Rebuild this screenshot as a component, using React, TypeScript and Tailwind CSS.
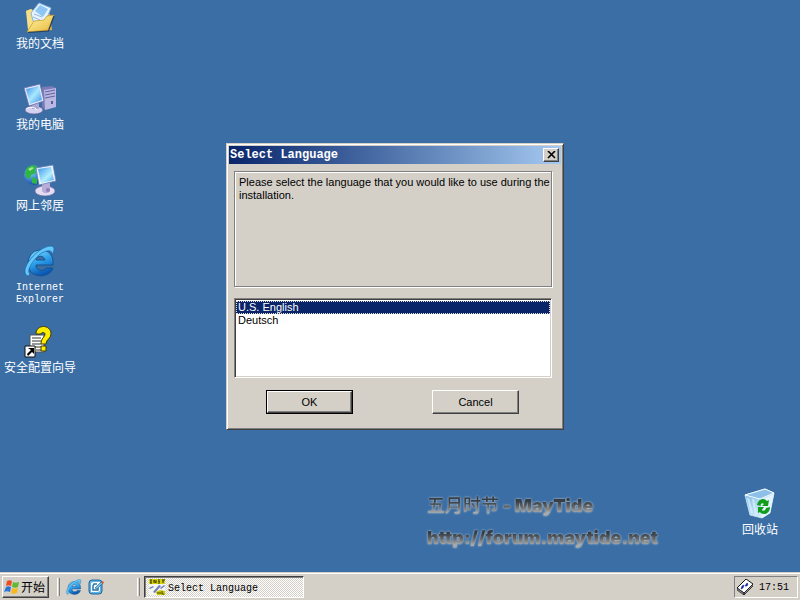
import React from 'react';

const songti = "font-['Liberation_Mono','Noto_Sans_CJK_SC',monospace]";

function DocumentsIcon() {
  return (
    <svg className="size-8" viewBox="0 0 32 32" aria-hidden="true">
      <defs>
        <linearGradient id="folder" x1="0" y1="0" x2="1" y2="1">
          <stop offset="0" stopColor="#fff6a8" />
          <stop offset="1" stopColor="#e8b83a" />
        </linearGradient>
      </defs>
      <path d="M2 9l5-2 4 3 15 2 2 16-20 2z" fill="#dfb544" />
      <path d="M2 9l5-2 4 3 6 3-2 16-11-1z" fill="#f7e084" />
      <path d="M7 11L15 1l12 5-6 15-12-2z" fill="#e4f3ff" stroke="#8ab4dc" strokeWidth="1" />
      <path d="M11 9l5-6 8 4-5 8z" fill="#8dc6f2" />
      <path d="M10 12l8 3M9 15l7 3" stroke="#9cb9d8" />
      <path d="M10 19l10-1 3-4 7-1-6 15L3 30z" fill="url(#folder)" stroke="#c59420" strokeWidth="0.7" />
      <path d="M4 30.500L24.500 29 30 14" fill="none" stroke="#27415f" strokeWidth="1.200" />
    </svg>
  );
}

function ComputerIcon() {
  return (
    <svg className="size-8" viewBox="0 0 32 32" aria-hidden="true">
      <defs>
        <linearGradient id="lcd" x1="0" y1="0" x2="1" y2="1">
          <stop offset="0" stopColor="#3f8fe6" />
          <stop offset="0.500" stopColor="#a8e8ff" />
          <stop offset="1" stopColor="#3b8ee0" />
        </linearGradient>
      </defs>
      <path d="M18 4l10-1 4 2v19l-11 3-3-3z" fill="#7b7ab8" />
      <path d="M20 7l12-2v19l-11 3z" fill="#b9b8e2" />
      <path d="M21 9l10-2M21 12l10-2M21 15l10-2" stroke="#6361a2" strokeWidth="1.200" />
      <path d="M28 18v3" stroke="#5c5b98" strokeWidth="2" />
      <ellipse cx="10" cy="27" rx="9" ry="4" fill="#d4d2ee" stroke="#615f99" strokeWidth="0.700" />
      <path d="M8 18h7v8H8z" fill="#aaa8d4" />
      <path d="M0 5l16-4 4 17-15 5z" fill="#e6eaff" stroke="#6670aa" strokeWidth="0.800" />
      <path d="M2 6l13-3 3 14-12 4z" fill="url(#lcd)" />
      <path d="M2 26c4-3 9-2 11 1" stroke="#fff" fill="none" />
    </svg>
  );
}

function NetworkIcon() {
  return (
    <svg className="size-8" viewBox="0 0 32 32" aria-hidden="true">
      <defs>
        <radialGradient id="globe" cx="0.350" cy="0.350" r="0.700">
          <stop offset="0" stopColor="#76d6ff" />
          <stop offset="1" stopColor="#1545a4" />
        </radialGradient>
        <linearGradient id="netlcd" x1="0" y1="0" x2="1" y2="1">
          <stop offset="0" stopColor="#3d94e8" />
          <stop offset="0.600" stopColor="#b4efff" />
          <stop offset="1" stopColor="#4599e4" />
        </linearGradient>
      </defs>
      <circle cx="10" cy="11" r="10" fill="url(#globe)" />
      <path d="M3 4c5-4 8-3 10-1l-2 3 1 3-5 2-1 4-4-2-1-4zM8 13l5 2v5l-5-1z" fill="#31b545" />
      <path d="M4 5l4-2 2 1-4 3z" fill="#a1ec86" />
      <ellipse cx="21" cy="27" rx="10" ry="5" fill="#e4dcf2" stroke="#7c71a6" strokeWidth="0.700" />
      <path d="M18 19h8v8c-2 3-6 3-8 0z" fill="#b8add6" />
      <path d="M12 4l17-3 3 16-17 4z" fill="#edf3ff" stroke="#6680b5" strokeWidth="0.800" />
      <path d="M14 5l13-2 3 13-13 3z" fill="url(#netlcd)" />
      <circle cx="24" cy="26" r="2" fill="#8c7bb6" />
    </svg>
  );
}

function ExplorerIcon({ className, id }: { className: string; id: string }) {
  return (
    <svg className={className} viewBox="0 0 32 32" aria-hidden="true">
      <defs>
        <linearGradient id={id} x1="0" y1="0" x2="0.400" y2="1">
          <stop offset="0" stopColor="#8be0ff" />
          <stop offset="0.550" stopColor="#2c9fea" />
          <stop offset="1" stopColor="#0b58b2" />
        </linearGradient>
      </defs>
      <path
        fillRule="evenodd"
        d="M17 5c8 0 13 6 12 15H12c0 6 8 7 10 3h7C26 34 4 34 4 19 4 11 9 5 17 5zM12 15h9c-1-5-8-5-9 0z"
        fill={`url(#${id})`}
        stroke="#134f91"
        strokeWidth="0.900"
      />
      <path d="M4 31C-4 28 5 13 15 6c7-5 15-7 15-2 0 2-1 4-2 6 1-6-6-5-12-1C8 16 2 26 6 29z" fill="#62c8fb" stroke="#1d69b0" strokeWidth="0.700" />
    </svg>
  );
}

function WizardIcon() {
  return (
    <svg className="size-8" viewBox="0 0 32 32" aria-hidden="true">
      <path d="M6 9h14v17H6z" fill="#fff" stroke="#555" />
      <path d="M8 12h9M8 15h10M8 18h9M10 21h8M12 24h6" stroke="#333" />
      <path d="M12 8c0-10 15-10 15 0 0 5-5 5-5 10h-5c0-6 4-7 4-10 0-2-4-2-4 0z" fill="#ffed00" stroke="#403c00" strokeWidth="1" />
      <path d="M17 20h5v5h-5z" fill="#ffed00" stroke="#403c00" />
      <path d="M1 20h10v11H1z" fill="#fff" stroke="#111" />
      <path d="M4 22h6v6l-2-2-4 4-1-2 4-4z" fill="#000" />
    </svg>
  );
}

function RecycleIcon() {
  return (
    <svg className="size-8" viewBox="0 0 32 32" aria-hidden="true">
      <defs>
        <linearGradient id="bin" x1="0" y1="0" x2="1" y2="1">
          <stop offset="0" stopColor="#6fb2e6" />
          <stop offset="0.500" stopColor="#b4dcf6" />
          <stop offset="1" stopColor="#f3fbff" />
        </linearGradient>
      </defs>
      <path d="M1 7L21 1l9 4-4 20-8 5-12-3z" fill="url(#bin)" stroke="#d5ecfb" strokeWidth="0.800" />
      <path d="M1 7l15 4 14-6-9-4z" fill="#8cc0e8" stroke="#f4fcff" />
      <path d="M16 12l2 18 8-5 4-19z" fill="#e6f6ff" opacity="0.850" />
      <path d="M4 10l4 15M9 11l3 16" stroke="#e6f7ff" strokeWidth="2" opacity="0.600" />
      <path d="M13 17c1-6 7-8 10-4l2-1-1 6h-6l2-2c-2-2-4 0-3 2zM26 19c0 7-7 9-10 5l-2 1v-6h6l-2 3c1 2 4 0 4-2z" fill="#129c1c" />
    </svg>
  );
}

function StartFlag() {
  return (
    <svg className="size-4 shrink-0" viewBox="0 0 16 16" aria-hidden="true">
      <path d="M3 2c2-1 3-1 5 0L7 7C5 6 4 6 2 7z" fill="#ee4b23" />
      <path d="M9 3c2 1 3 1 6 0l-1 5c-2 1-4 1-6 0z" fill="#62b733" />
      <path d="M2 8c2-1 3-1 5 0l-1 5c-2-1-4-1-6 0z" fill="#2d74d8" />
      <path d="M8 9c2 1 3 1 6 0l-1 5c-3 1-4 1-6 0z" fill="#f6bb18" />
    </svg>
  );
}

function ShowDesktopIcon() {
  return (
    <svg className="size-4" viewBox="0 0 16 16" aria-hidden="true">
      <rect x="1" y="1" width="13" height="14" rx="3" fill="#5fb0e2" stroke="#1b679e" />
      <path d="M3 4l2-1h7v9l-2 1H3z" fill="#fff" />
      <path d="M9 5H6L5 7v4h5V9" fill="none" stroke="#2472ac" strokeWidth="1.500" />
      <path d="M7 9l6-6 2 1-6 6z" fill="#73bce5" stroke="#185c91" strokeWidth="0.600" />
      <path d="M13 3l1-1 2 1-1 2z" fill="#d8532b" />
    </svg>
  );
}

function SetupIcon() {
  return (
    <svg className="size-4 shrink-0" viewBox="0 0 16 16" aria-hidden="true">
      <path d="M0 0h16v16H0z" fill="#f5f5f0" />
      <path d="M0 0h16v5H0z" fill="#d6d20a" />
      <path d="M1 1h2M2 1v3M1 4h2M5 4V1l2 3V1M9 1h2M9 2l2 1M9 4h2M13 1h3M14 1v3" stroke="#3d3b00" fill="none" />
      <path d="M0 9l4-2 1 1-4 2zM4 13l6-7 2 1-6 7zM11 9l4-3 1 1-4 3z" fill="#6d7fc0" />
      <path d="M7 13l4-2 5 1v4H8z" fill="#c9c908" />
      <path d="M8 14h2M11 13v2M13 12v3h2" stroke="#4d4b00" fill="none" />
    </svg>
  );
}

function PenIcon() {
  return (
    <svg className="size-4 shrink-0" viewBox="0 0 16 16" aria-hidden="true">
      <path d="M0 9L9 0l7 5-9 9z" fill="#fff" stroke="#111" />
      <path d="M0 9v2l7 5v-2zM7 16l9-9V5l-9 9z" fill="#8f8f98" stroke="#111" strokeWidth="0.700" />
      <path d="M4 10l1-3 2-1-1 3zM8 7l2-3 1 1-1 2z" fill="#1728a4" stroke="#1728a4" strokeWidth="0.600" />
    </svg>
  );
}

function Shortcut({ icon, lines }: { icon: React.ReactNode; lines: string[] }) {
  return (
    <button type="button" className={`flex h-[81px] w-20 flex-col items-center gap-[5px] pt-0.5 text-white ${songti}`}>
      {icon}
      <span className="flex flex-col items-center whitespace-nowrap">
        {lines.map((line) => (
          <span key={line} className={/^[A-Z]/.test(line) ? 'text-[10px] leading-3' : 'text-[12px] leading-3'}>
            {line}
          </span>
        ))}
      </span>
    </button>
  );
}

const raised =
  'border border-t-white border-l-white border-r-[#404040] border-b-[#404040] bg-[#d4d0c8] shadow-[inset_-1px_-1px_0_#808080]';

function LanguageDialog() {
  return (
    <form
      role="dialog"
      aria-labelledby="dialog-title"
      onSubmit={(event) => event.preventDefault()}
      className="absolute top-[143px] left-[226px] w-[338px] border border-t-[#d4d0c8] border-r-[#404040] border-b-[#404040] border-l-[#d4d0c8] bg-[#d4d0c8] p-[2px] font-['Liberation_Sans',Arial,sans-serif] text-[11px] leading-[13px] text-black shadow-[inset_1px_1px_0_#fff,inset_-1px_-1px_0_#808080]"
    >
      <header className="flex h-[18px] items-center justify-between bg-linear-to-r from-[#0a246a] to-[#a6caf0] pr-[2px] pl-px">
        <h1 id="dialog-title" className={`text-[12px] font-bold text-white ${songti}`}>Select Language</h1>
        <button type="button" aria-label="Close" className={`flex h-[14px] w-4 items-center justify-center ${raised}`}>
          <svg className="h-2 w-[9px]" viewBox="0 0 9 8" aria-hidden="true">
            <path d="M1 0l7 7M8 0L1 7" stroke="#000" strokeWidth="1.600" />
          </svg>
        </button>
      </header>
      <div className="pt-[7px] pr-[9px] pb-[13px] pl-[5px]">
        <div className="h-[116px] border border-[#808080] py-1 pl-1 shadow-[1px_1px_0_#fff,inset_1px_1px_0_#fff]">
          <label htmlFor="language">Please select the language that you would like to use during the installation.</label>
        </div>
        <select
          id="language"
          size={5}
          defaultValue="en"
          className="mt-[11px] block h-[80px] w-full appearance-none overflow-hidden rounded-none border border-t-[#808080] border-r-white border-b-white border-l-[#808080] bg-white pt-[2px] pr-px pl-px shadow-[inset_1px_1px_0_#404040,inset_-1px_-1px_0_#d4d0c8] outline-none"
        >
          <option value="en" className="h-[13px] min-h-0 px-[2px] py-0 leading-[13px] outline outline-1 -outline-offset-1 outline-dotted outline-[#e8e4da] checked:bg-linear-to-r checked:from-[#0a246a] checked:to-[#0a246a] [-webkit-text-fill-color:white]">
            U.S. English
          </option>
          <option value="de" className="h-[13px] min-h-0 px-[2px] py-0 leading-[13px]">Deutsch</option>
        </select>
        <div className="mt-3 flex justify-between pr-[33px] pl-8">
          <button type="submit" className="h-6 w-[87px] border border-black">
            <span className={`flex h-full items-center justify-center ${raised}`}>OK</span>
          </button>
          <button type="button" className={`h-6 w-[87px] ${raised}`}>Cancel</button>
        </div>
      </div>
    </form>
  );
}

function Divider() {
  return <span className="h-[18px] w-[3px] border-r border-l border-r-[#808080] border-l-white" />;
}

function Taskbar() {
  return (
    <footer className="flex h-7 items-center border-t border-[#d4d0c8] bg-[#d4d0c8] pt-px pr-[2px] pl-[2px] text-black shadow-[inset_0_1px_0_#fff]">
      <button type="button" className={`flex h-[22px] w-[47px] items-center gap-px pl-px font-['Noto_Sans_CJK_SC',sans-serif] text-[12px] leading-5 whitespace-nowrap ${raised}`}>
        <StartFlag />
        开始
      </button>
      <span className="ml-2 flex"><Divider /></span>
      <nav aria-label="Quick launch" className="ml-[6px] flex w-[71px] gap-[6px]">
        <button type="button" aria-label="Internet Explorer"><ExplorerIcon className="size-4" id="ie-small" /></button>
        <button type="button" aria-label="Show desktop"><ShowDesktopIcon /></button>
      </nav>
      <Divider />
      <button
        type="button"
        className={`ml-1 flex h-[22px] w-40 items-center gap-[3px] border border-t-[#404040] border-r-white border-b-white border-l-[#404040] bg-[repeating-conic-gradient(#fff_0_25%,#d4d0c8_0_50%)] bg-[length:2px_2px] pl-1 text-[10px] shadow-[inset_1px_1px_0_#808080] ${songti}`}
      >
        <SetupIcon />
        <span className="pt-0.5">Select Language</span>
      </button>
      <div className={`ml-auto flex h-[22px] w-16 items-center gap-[6px] border border-t-[#808080] border-r-white border-b-white border-l-[#808080] pl-[2px] text-[10px] ${songti}`}>
        <PenIcon />
        <time>17:51</time>
      </div>
    </footer>
  );
}

const metallic =
  'bg-linear-to-b from-[#363d45] from-35% via-[#5d6165] via-50% to-[#a9a9a6] to-70% bg-clip-text text-transparent drop-shadow-[0_0_1px_#c8ccd0]';

export default function App() {
  return (
    <div className="flex h-screen flex-col overflow-hidden bg-[#3a6ea5]">
      <main className="relative flex flex-1 items-start justify-between">
        <nav aria-label="Desktop" className="flex flex-col">
          <Shortcut icon={<DocumentsIcon />} lines={['我的文档']} />
          <Shortcut icon={<ComputerIcon />} lines={['我的电脑']} />
          <Shortcut icon={<NetworkIcon />} lines={['网上邻居']} />
          <Shortcut icon={<ExplorerIcon className="size-8" id="ie-large" />} lines={['Internet', 'Explorer']} />
          <Shortcut icon={<WizardIcon />} lines={['安全配置向导']} />
        </nav>
        <div className="self-end pb-[5px]">
          <Shortcut icon={<RecycleIcon />} lines={['回收站']} />
        </div>
        <div className="absolute top-[490px] left-[427px] font-['Inter','Noto_Sans_CJK_SC',sans-serif] text-[18px] leading-8 font-black whitespace-nowrap">
          <p className={metallic}><span className="font-medium">五月时节</span> - MayTide</p>
          <p className={metallic}>http://forum.maytide.net</p>
        </div>
        <LanguageDialog />
      </main>
      <Taskbar />
    </div>
  );
}
